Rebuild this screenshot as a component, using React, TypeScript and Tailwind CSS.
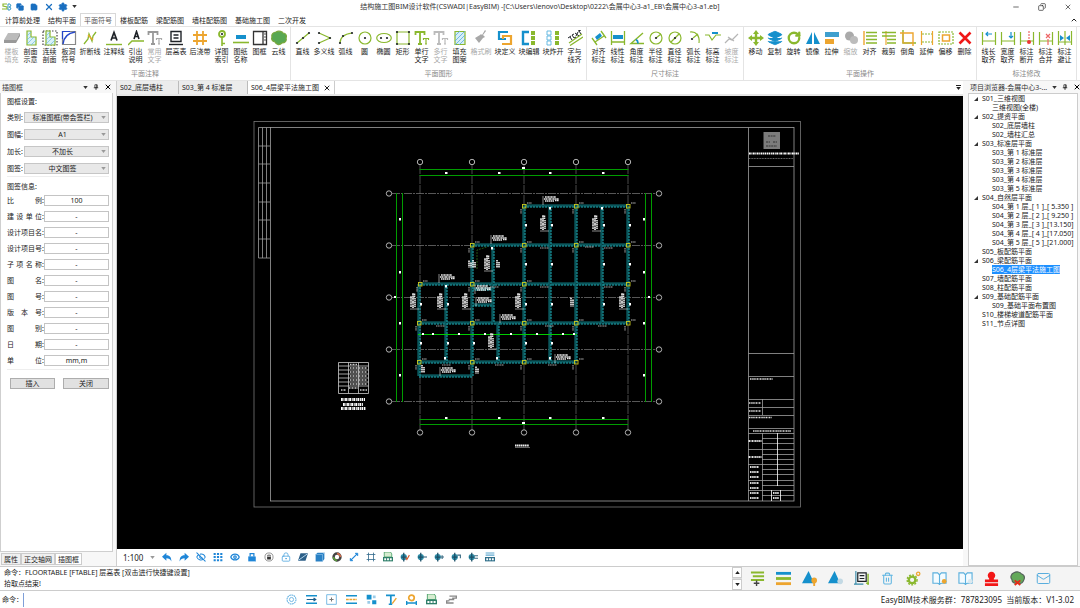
import type { ReactNode } from 'react';
import {
  ChevronUp, Copy, Eye, EyeOff, Layers, LockKeyhole, Mail, Minus, RotateCw, Save, Settings, Trash2, X,
} from 'lucide-react';

const G = '#8ab82e';
const B = '#1590cc';
const O = '#eda52f';
const K = '#1f2328';

interface Tool {
  icon: ReactNode;
  label: string[];
  wide?: boolean;
  disabled?: boolean;
}

interface Group {
  name: string;
  tools: Tool[];
}

function Ico({ children }: { children: ReactNode }) {
  return (
    <svg viewBox="0 0 16 16" className="h-4 w-4" fill="none" strokeWidth="1.2" aria-hidden="true">
      {children}
    </svg>
  );
}

const tt = (a: string, b: string) => (
  <Ico>
    <path d="M1.500 5V2h9v3M6 2v12M4 14h4" stroke={a} strokeWidth="1.800" />
    <path d="M9.500 10V8.500h5V10M12 8.500V14M11 14h2" stroke={b} strokeWidth="1.200" />
  </Ico>
);

const dot = (x: number, y: number) => <circle cx={x} cy={y} r="1.1" fill={K} />;

const groups: Group[] = [
  {
    name: '平面注释',
    tools: [
      { label: ['楼板', '填充'], disabled: true, icon: <Ico><path d="M4 3h12l-4 7H0z" fill="#bbb" /><path d="M0 10h12l4-7v3l-4 7H0z" fill="#999" /></Ico> },
      { label: ['剖面', '示意'], icon: <Ico><path d="M4 1h4v6h5v8H4z" fill="#d8f0f8" stroke={G} /><path d="M4 6l4-4M4 10l4-4M4 14l7-7M8 15l5-5" stroke="#6bbbe0" strokeWidth=".7" /></Ico> },
      { label: ['连续', '剖面'], icon: <Ico><path d="M1 1h14v14H1z" stroke="#444" strokeDasharray="1.5 1.5" /><path d="M4 1h4v6h5v8H4z" fill="#d8f0f8" stroke={G} /><path d="M4 6l4-4M4 10l4-4M4 14l7-7M8 15l5-5" stroke="#6bbbe0" strokeWidth=".7" /></Ico> },
      { label: ['板洞', '符号'], icon: <Ico><path d="M1.500 1.500h13v13h-13z" stroke="#888" /><path d="M2 14C3 6 7 3 14 2" stroke="#2647c9" strokeWidth="1.500" /><path d="M1.500 9V1.500H9" stroke="#2647c9" /></Ico> },
      { label: ['折断线'], wide: true, icon: <Ico><path d="M2 14l4-5 1-5 3 7 1-5 3-4" stroke={G} strokeWidth="1.300" /><path d="M6 5l5 5" stroke={O} /></Ico> },
      { label: ['注释线'], wide: true, icon: <Ico><path d="M5 10.500L8 2.500l3 8M6 8h4" stroke={K} strokeWidth="1.700" /><path d="M0 14.500h16" stroke={G} strokeWidth="1.400" /></Ico> },
      { label: ['引出', '说明'], icon: <Ico><path d="M6 9L8.500 1.500 11 9M7 6.500h3" stroke={K} strokeWidth="1.600" /><path d="M0 15l4-4h12" stroke={G} strokeWidth="1.400" /></Ico> },
      { label: ['常用', '文字'], disabled: true, icon: tt('#999', '#aaa') },
      { label: ['层高表'], wide: true, icon: <Ico><path d="M3 1.500h10v10H3zM5.500 5h5M5.500 8h5" stroke={K} strokeWidth="1.400" /><path d="M1 14.500h14" stroke={K} strokeWidth="1.400" /></Ico> },
      { label: ['后浇带'], wide: true, icon: <Ico><path d="M5 1v14M11 1v14M1 5h14M1 11h14" stroke={O} strokeWidth="1.800" /></Ico> },
      { label: ['详图', '索引'], icon: <Ico><circle cx="8" cy="4" r="3" stroke={G} strokeWidth="1.800" /><path d="M8 7v9M8 13.500h3" stroke={G} strokeWidth="1.600" />{dot(8, 4)}</Ico> },
      { label: ['图纸', '名称'], icon: <Ico><path d="M3 5h10v4H3z" fill={B} /><path d="M0 12.500h16" stroke={G} strokeWidth="1.600" /></Ico> },
      { label: ['图框'], icon: <Ico><path d="M1.500 1.500h13v13h-13zM11 1.500v13" stroke="#333" strokeWidth="1.300" /><path d="M12 4h2M12 7h2M12 10h2" stroke="#555" /></Ico> },
      { label: ['云线'], icon: <Ico><path d="M5 2c3-2 7 0 7 1 3 0 4 3 3 5 1 3-1 5-4 5-3 3-6 1-7-1-3-1-4-3-3-5-1-3 2-5 4-5z" fill="#58a852" stroke="#7aa83c" /></Ico> },
    ],
  },
  {
    name: '平面图形',
    tools: [
      { label: ['直线'], icon: <Ico><path d="M2 13L14 3" stroke={G} />{dot(2, 13)}{dot(8, 8)}{dot(14, 3)}</Ico> },
      { label: ['多义线'], wide: true, icon: <Ico><path d="M3 3l11 5-11 5" stroke={G} />{dot(3, 3)}{dot(14, 8)}{dot(3, 13)}</Ico> },
      { label: ['弧线'], icon: <Ico><path d="M2 13c0-6 5-9 12-10" stroke={G} />{dot(2, 13)}{dot(5, 6)}{dot(14, 3)}</Ico> },
      { label: ['圆'], icon: <Ico><circle cx="8" cy="8" r="6" stroke={G} />{dot(8, 8)}</Ico> },
      { label: ['椭圆'], icon: <Ico><ellipse cx="8" cy="8" rx="7.300" ry="4.500" stroke={G} />{dot(5, 8)}{dot(11, 8)}</Ico> },
      { label: ['矩形'], icon: <Ico><path d="M2 2h12v12H2z" stroke={G} />{dot(2, 2)}{dot(14, 2)}{dot(2, 14)}{dot(14, 14)}</Ico> },
      { label: ['单行', '文字'], icon: tt(G, G) },
      { label: ['多行', '文字'], disabled: true, icon: tt('#bbb', '#bbb') },
      { label: ['填充', '图案'], icon: <Ico><path d="M3 1.500h10v13H3z" fill="#d6edf8" stroke={G} /><path d="M3 6l5-5M3 11L13 1M3 15L13 5M7 15l6-6" stroke="#55aedb" strokeWidth=".8" /></Ico> },
      { label: ['格式刷'], wide: true, disabled: true, icon: <Ico><path d="M13 1l-3 4 2 2-2 1-4 5-4-5 5-3 1-1 1 1 3-5z" fill="#a8a8a8" /></Ico> },
      { label: ['块定义'], wide: true, icon: <Ico><path d="M11 2H2v7h7" stroke={B} strokeWidth="2.200" /><path d="M5 14h9V6H6v3" stroke={O} strokeWidth="2.200" /></Ico> },
      { label: ['块编辑'], wide: true, icon: <Ico><path d="M8 2H2v12h6" stroke={B} strokeWidth="2.400" /><path d="M12 1v14" stroke={G} strokeWidth="4" strokeDasharray="4 1" /></Ico> },
      { label: ['块炸开'], wide: true, icon: <Ico><path d="M2 1h4v4H2zM2 6h4v4H2zM2 11h4v4H2z" stroke="#5ab3df" strokeWidth=".9" /><path d="M12 1v14" stroke={G} strokeWidth="4" strokeDasharray="4 1" /></Ico> },
      { label: ['字与', '线齐'], icon: <Ico><path d="M2 13L15 4M3 15.500L16 7" stroke={G} strokeWidth="1.300" /><path d="M1 8l3-2M3 7l2 3M5 5l2 3 2-1M5 5l2-1M8 3l4 3M11 2l-2 4M11 1l3-1M12 1l2 3" stroke={K} strokeWidth="1" /></Ico> },
    ],
  },
  {
    name: '尺寸标注',
    tools: [
      { label: ['对齐', '标注'], icon: <Ico><path d="M1 8l5 7M10 1l5 7M4 12l9-6" stroke={G} strokeWidth="1.300" /><path d="M4 7l5-4 2 3-5 4z" fill={B} /></Ico> },
      { label: ['线性', '标注'], icon: <Ico><path d="M1.500 1v14M14.500 1v14M2 12h12" stroke={G} strokeWidth="1.300" /><path d="M3 5h10v4H3z" fill={B} /></Ico> },
      { label: ['角度', '标注'], icon: <Ico><path d="M14 3L2 13.500h13" stroke={G} strokeWidth="1.400" /><path d="M7 9.500c2 1 2 2.500 2 4" stroke={B} strokeWidth="1.800" /></Ico> },
      { label: ['半径', '标注'], icon: <Ico><circle cx="8" cy="8" r="6" stroke={G} /><path d="M8 8l5-4" stroke={G} />{dot(8, 8)}</Ico> },
      { label: ['直径', '标注'], icon: <Ico><circle cx="8" cy="8" r="6" stroke={G} /><path d="M4 12l8-8" stroke={G} />{dot(8, 8)}</Ico> },
      { label: ['弧长', '标注'], icon: <Ico><path d="M4 2c6-1 10 4 9 11M7 8l5-4" stroke={G} />{dot(6, 9)}</Ico> },
      { label: ['标高', '标注'], icon: <Ico><path d="M0 5h4l3 5 4-5h5" stroke={G} strokeWidth="1.200" /><path d="M7 3h6" stroke={B} strokeWidth="2" /></Ico> },
      { label: ['坡度', '标注'], disabled: true, icon: <Ico><path d="M1 13l4-4 3 1 6-6M4 7l6 4" stroke="#b5b5b5" /></Ico> },
    ],
  },
  {
    name: '平面操作',
    tools: [
      { label: ['移动'], icon: <Ico><path d="M8 0l3 4H9.200v2.800H12V5l4 3-4 3V9.200H9.200V12H11l-3 4-3-4h1.800V9.200H4V11L0 8l4-3v1.800h2.800V4H5z" fill={G} /></Ico> },
      { label: ['复制'], icon: <Layers className="h-4 w-4 fill-[#1590cc] text-[#1590cc]" strokeWidth={1.5} /> },
      { label: ['旋转'], icon: <RotateCw className="h-4 w-4 p-px text-[#8ab82e]" strokeWidth={4} /> },
      { label: ['镜像'], icon: <Ico><path d="M7 2v12H1zM9 2v12h6z" fill={B} /></Ico> },
      { label: ['拉伸'], icon: <Ico><path d="M1 2h14v5H1z" fill="#3f9fce" /><path d="M1 9h9v5H1z" fill={O} /></Ico> },
      { label: ['缩放'], disabled: true, icon: <Ico><circle cx="6.500" cy="6" r="4.500" fill="#aaa" /><circle cx="11" cy="10" r="4" fill="#bcbcbc" /></Ico> },
      { label: ['对齐'], icon: <Ico><path d="M2 1v14" stroke={O} strokeWidth="1.400" /><path d="M4 2.500h11M4 6h11M4 9.500h11M4 13h11" stroke={G} strokeWidth="1.700" /></Ico> },
      { label: ['裁剪'], icon: <Ico><path d="M5 1v14" stroke={O} /><path d="M1 2.500h14M1 6h14M6 9.500h9M6 13h9" stroke={G} strokeWidth="1.700" /></Ico> },
      { label: ['倒角'], icon: <Ico><path d="M3 0v13h13" stroke={G} strokeWidth="1.400" /><path d="M0 3h13v13" stroke={O} strokeWidth="1.400" /><path d="M3 3v10h10" stroke={O} /></Ico> },
      { label: ['延伸'], icon: <Ico><path d="M2.500 1v14M13.500 1v14" stroke={O} strokeWidth="1.200" /><path d="M3 4h10M3 12h10" stroke={G} strokeDasharray="2 1" /></Ico> },
      { label: ['偏移'], icon: <Ico><path d="M1 2h14v12H1z" stroke={G} strokeDasharray="2 1" /><path d="M4.500 5h7v6h-7z" stroke={O} strokeWidth="1.500" /></Ico> },
      { label: ['删除'], icon: <Ico><path d="M2.500 2.500l11 11M13.500 2.500l-11 11" stroke="#f01818" strokeWidth="2.600" /></Ico> },
    ],
  },
  {
    name: '标注修改',
    tools: [
      { label: ['线长', '取齐'], icon: <Ico><path d="M1.500 2v13M14.500 2v13M1 11h14" stroke={G} /><path d="M11 4H5M7 2L5 4l2 2" stroke={B} /></Ico> },
      { label: ['宽度', '取齐'], icon: <Ico><path d="M1.500 2v13M14.500 2v13M1 11h14" stroke={G} /><path d="M11 2v6M9 6l2 2 2-2" stroke={B} /></Ico> },
      { label: ['标注', '断开'], icon: <Ico><path d="M1.500 2v13M14.500 2v13M1 11h14" stroke={G} /><path d="M10 1v8" stroke="#e66" strokeDasharray="2 1" /><circle cx="10" cy="12" r="2" fill="#e33" /></Ico> },
      { label: ['标注', '合并'], icon: <Ico><path d="M1.500 2v13M14.500 2v13M1 11h14" stroke={G} /><path d="M8 4l4 4M12 4L8 8M10 9v6" stroke="#e66" /></Ico> },
      { label: ['标注', '避让'], icon: <Ico><path d="M1.500 1v14M8 1v14M14.500 1v14M1 12h14" stroke={G} /><path d="M3 5l4 3-4 3zM13 5L9 8l4 3z" fill={B} /></Ico> },
    ],
  },
];

const ribbonTabs = ['计算前处理', '结构平面', '平面符号', '楼板配筋', '梁配筋图', '墙柱配筋图', '基础施工图', '二次开发'];

const selects = [
  { label: '类别:', value: '标准图框(带会签栏)' },
  { label: '图幅:', value: 'A1' },
  { label: '加长:', value: '不加长' },
  { label: '图签:', value: '中文图签' },
];

const fields = [
  ['比例', '100'], ['建设单位', '-'], ['设计项目名', '-'], ['设计项目号', '-'], ['子项名称', '-'], ['图名', '-'],
  ['图号', '-'], ['版本号', '-'], ['图别', '-'], ['日期', '-'], ['单位', 'mm,m'],
];

const tree = [
  { name: 'S01_三维视图', items: ['三维视图(全楼)'] },
  { name: 'S02_提资平面', items: ['S02_底层墙柱', 'S02_墙柱汇总'] },
  { name: 'S03_标准层平面', items: ['S03_第 1 标准层', 'S03_第 2 标准层', 'S03_第 3 标准层', 'S03_第 4 标准层', 'S03_第 5 标准层'] },
  { name: 'S04_自然层平面', items: ['S04_第 1 层_[ 1 ]_[ 5.350 ]', 'S04_第 2 层_[ 2 ]_[ 9.250 ]', 'S04_第 3 层_[ 3 ]_[13.150]', 'S04_第 4 层_[ 4 ]_[17.050]', 'S04_第 5 层_[ 5 ]_[21.000]'] },
  { name: 'S05_板配筋平面', items: [] },
  { name: 'S06_梁配筋平面', items: ['S06_4层梁平法施工图'] },
  { name: 'S07_墙配筋平面', items: [] },
  { name: 'S08_柱配筋平面', items: [] },
  { name: 'S09_基础配筋平面', items: ['S09_基础平面布置图'] },
  { name: 'S10_楼梯坡道配筋平面', items: [] },
  { name: 'S11_节点详图', items: [] },
];

const SELECTED = 'S06_4层梁平法施工图';

function Caret({ className = '' }: { className?: string }) {
  return (
    <svg viewBox="0 0 6 4" className={`h-[3px] w-[5px] ${className}`} aria-hidden="true">
      <path d="M0 0h6L3 4z" fill="currentColor" />
    </svg>
  );
}

function Pin() {
  return (
    <svg viewBox="0 0 8 8" className="h-1.5 w-1.5" fill="none" stroke="#222" aria-hidden="true">
      <path d="M2.500 1h3v4h-3zM1 5h6M4 5v3M5 1v4" />
    </svg>
  );
}

function PanelTitle({ title }: { title: string }) {
  return (
    <div className="flex h-3 items-center gap-[5px] pl-0.5 pr-px text-[#333]">
      <h2 className="flex-1 whitespace-nowrap">{title}</h2>
      <button aria-label="菜单"><Caret /></button>
      <button aria-label="固定"><Pin /></button>
      <button aria-label="关闭面板"><X className="h-2 w-2 text-black" strokeWidth={3} /></button>
    </div>
  );
}

function TitleBar() {
  return (
    <header className="grid h-[13px] grid-cols-[1fr_auto_1fr] items-center">
      <div className="flex items-center gap-1 pl-0.5 text-[#1a6fc0]">
        <svg viewBox="0 0 10 8" className="h-2 w-2.5" fill="none" aria-hidden="true">
          <path d="M5 1H1v2l4 1v2H0" stroke={G} strokeWidth="1.200" />
          <path d="M6 1h2l1 2-2 1 2 1-1 2H6z" stroke="#3a9bc8" />
        </svg>
        <button aria-label="打开"><Copy className="h-2 w-2 fill-[#1a6fc0]" /></button>
        <button aria-label="保存" className="pl-0.5"><Save className="h-2 w-2 fill-[#1a6fc0]" /></button>
        <button aria-label="清除" className="pl-0.5"><X className="h-2.5 w-2.5" strokeWidth={3} /></button>
        <button aria-label="设置"><Settings className="h-2.5 w-2.5 fill-[#1a6fc0]" /></button>
        <button aria-label="更多"><Caret className="text-[#333]" /></button>
      </div>
      <h1 className="whitespace-nowrap text-[#333]">
        结构施工图BIM设计软件(CSWADI|EasyBIM) -[C:\Users\lenovo\Desktop\0222\会展中心3-a1_EB\会展中心3-a1.eb]
      </h1>
      <div className="flex items-center justify-end gap-[18px] pr-2">
        <button aria-label="最小化"><Minus className="h-2 w-2" /></button>
        <button aria-label="还原"><Copy className="h-2 w-2 -scale-x-100" /></button>
        <button aria-label="关闭"><X className="h-2 w-2" /></button>
      </div>
    </header>
  );
}

function Ribbon() {
  return (
    <>
      <nav className="flex h-[13px] items-stretch pl-px">
        {ribbonTabs.map(t => (
          <button
            key={t}
            className={`whitespace-nowrap border-x border-t px-[3px] ${t === '平面符号' ? 'border-[#d8d8d8] bg-white text-[#555]' : 'border-transparent'}`}
          >
            {t}
          </button>
        ))}
        <button aria-label="收起功能区" className="ml-auto px-0.5"><ChevronUp className="h-2 w-2" strokeWidth={3} /></button>
      </nav>
      <div className="flex h-[55px] border-y border-[#e4e4e4]">
        {groups.map(g => (
          <section key={g.name} className="flex flex-col border-r border-[#e4e4e4] px-0.5 pt-[3px]">
            <div className="flex flex-1 items-start">
              {g.tools.map(t => (
                <button
                  key={t.label.join('')}
                  disabled={t.disabled}
                  className={`flex flex-col items-center gap-0.5 leading-[8px] ${t.wide ? 'w-6' : 'w-[19px]'} ${t.disabled ? 'text-[#aaa]' : ''}`}
                >
                  {t.icon}
                  <span className="whitespace-nowrap">
                    {t.label.map(l => <span key={l} className="block">{l}</span>)}
                  </span>
                </button>
              ))}
            </div>
            <h2 className="h-3 text-center text-[#888]">{g.name}</h2>
          </section>
        ))}
      </div>
    </>
  );
}

function FramePanel() {
  return (
    <aside className="flex w-[113px] shrink-0 flex-col">
      <PanelTitle title="插图框" />
      <form className="flex-1 border-x border-b border-[#cfcfcf] bg-white pl-1.5 pr-[3px] pt-[3px]">
        <fieldset className="border-b border-[#eee]">
          <legend className="h-3 leading-[12px]">图框设置:</legend>
          <div className="flex flex-col gap-1.5 pb-0.5 pt-1">
            {selects.map(s => (
              <label key={s.label} className="flex h-[11px] items-center justify-between">
                {s.label}
                <span className="relative flex">
                  <select className="h-[11px] w-[85px] appearance-none border border-[#c6c6c6] bg-[#e8e8e8] pr-2 leading-[9px] [text-align-last:center]">
                    <option>{s.value}</option>
                  </select>
                  <Caret className="pointer-events-none absolute right-[3px] top-1 text-[#999]" />
                </span>
              </label>
            ))}
          </div>
        </fieldset>
        <fieldset className="border-b border-[#eee] pt-1.5">
          <legend className="h-3 pt-1 leading-[12px]">图签信息:</legend>
          <div className="flex flex-col gap-[5px] pb-[3px]">
            {fields.map(([name, value]) => (
              <label key={name} className="flex h-[11px] items-center">
                <span className="w-[35px] [text-align-last:justify]">{name}</span>
                <span>:</span>
                <input defaultValue={value} className="ml-auto h-[11px] w-[65px] border border-[#c4c4c4] text-center" />
              </label>
            ))}
          </div>
        </fieldset>
        <div className="flex justify-between pl-[3px] pt-2">
          <button type="button" className="h-[11px] w-[45px] border border-[#adadad] bg-[#e1e1e1] leading-[9px]">插入</button>
          <button type="button" className="h-[11px] w-[46px] border border-[#adadad] bg-[#e1e1e1] leading-[9px]">关闭</button>
        </div>
      </form>
      <div className="flex h-3.5 items-center pl-px">
        <button className="h-3 border border-[#ccc] bg-[#f0f0f0] px-0.5">属性</button>
        <button className="h-3 border border-[#ccc] bg-[#f0f0f0] px-0.5">正交轴网</button>
        <button className="h-3 border border-[#ccc] bg-white px-0.5">插图框</button>
      </div>
    </aside>
  );
}

const colX = [420, 472, 524, 576, 628];
const rowY = [193, 245, 297, 349, 401];

// [x1, y1, x2, y2]
const beams = [
  [524, 206, 628, 206], [472, 245, 628, 245], [420, 284, 628, 284], [419, 323, 628, 323],
  [419, 362, 576, 362], [419, 376, 472, 376], [472, 305, 493, 305], [472, 289, 493, 289],
  [419, 284, 419, 376], [446, 284, 446, 362], [472, 245, 472, 376], [493, 245, 493, 323],
  [498, 323, 498, 362], [524, 206, 524, 362], [550, 206, 550, 362], [576, 206, 576, 362],
  [602, 206, 602, 323], [628, 206, 628, 323],
];

const columns = [
  [524, 206], [576, 206], [628, 206], [472, 245], [524, 245], [576, 245], [628, 245],
  [420, 284], [472, 284], [524, 284], [628, 284], [419, 323], [472, 323], [524, 323],
  [576, 323], [628, 323], [419, 362], [472, 362], [524, 362], [576, 362],
];

const notesH = [[543, 199], [491, 238], [439, 277], [476, 300], [500, 317], [555, 357], [440, 370], [475, 288]];
const notesV = [[543, 217], [595, 217], [487, 257], [413, 295], [440, 295], [465, 295], [518, 295], [622, 295], [491, 335]];
const smallNotes = [[473, 264, 8], [469, 264, 7], [497, 264, 8], [422, 369, 8], [476, 370, 7], [571, 302, 9]];

function Note({ x, y, vertical }: { x: number; y: number; vertical?: boolean }) {
  return (
    <g transform={vertical ? `translate(${x} ${y + 14}) rotate(-90)` : `translate(${x} ${y})`} stroke="#e8e8e8" fill="none">
      <path d="M0 -3v9" strokeWidth=".6" />
      <path d="M2 -2h11" strokeWidth="1.600" strokeDasharray="1.500 .3 .8 .3" />
      <path d="M1 0h15" strokeWidth="1.700" strokeDasharray="1 .3 2 .4" />
      <path d="M2 2h9M12 1.500h4" strokeWidth="1.600" strokeDasharray="1.600 .4" />
    </g>
  );
}

function Drawing() {
  const titleRows = [166, 353, 376, 399, 407, 415, 428, 433];
  const signRows = [438, 443, 449, 454, 459, 464, 469, 474, 480, 485, 490, 495];
  return (
    <svg viewBox="117 96 846 453" className="min-h-0 w-full flex-1 bg-black" fill="none" role="img" aria-label="梁平法施工图">
      <g stroke="#a0a0a0" strokeWidth=".8">
        <rect x="254" y="121.500" width="546.500" height="385.500" stroke="#777" />
        <rect x="270.500" y="127.500" width="523.500" height="373.500" />
        <path d="M258.500 127.500H270M258.500 127.500V258M262.500 127.500V258M266.500 127.500V258M258.500 258H270M258.500 146H270M258.500 164H270M258.500 183H270M258.500 202H270M258.500 220H270M258.500 239H270" />
        <path d="M748.500 127.500V501" />
        {titleRows.map(y => <path key={y} d={`M748.500 ${y}.5H794`} />)}
        {signRows.map(y => <path key={y} d={`M762 ${y}.5H794`} />)}
        <path d="M762.500 399V415M762.500 433V501" />
        <path d="M777.500 433V486M771.500 490V501M780.500 490V501" stroke="#fff" />
        <path d="M748 464.500H762M748 480.500H762M748 449.500H762M748 490.500H762" />
      </g>
      <rect x="763.500" y="132" width="16.500" height="17" fill="#7c7c7c" />
      <path d="M768 136h8M766 142h4M773 142h4M766 146h11" stroke="#333" strokeDasharray="2 .6" />
      <path d="M749 153.500H799" stroke="#fff" strokeWidth="2" strokeDasharray="1.800 .6 1 .5" />
      <path d="M749 158.500H793" stroke="#999" strokeWidth=".7" strokeDasharray="1 .6" />
      <g stroke="#ddd" strokeWidth="1.500" strokeDasharray="1.500 .5 .8 .5">
        <path d="M750 379H773M749 403H761M749 411H761M749 417.500H772M753 431H791" />
        <path d="M748.500 441H762M748.500 457H762M750 467H759M750 472H759M750 477H759M750 483H759M750 488H759M750 493H759M750 498H759M773 493h6M773 498h6" strokeWidth="2.200" />
      </g>

      {/* axis grid */}
      <g stroke="#7d7d7d" strokeWidth=".7">
        {colX.map(x => <path key={x} d={`M${x} 165V430`} stroke="#6c6c6c" strokeDasharray="9 1" />)}
        {rowY.map(y => <path key={y} d={`M392 ${y}.5H656`} strokeDasharray="8 1 2 1" />)}
      </g>
      <g stroke="#c5c5c5" strokeWidth=".9">
        {colX.map(x => <g key={x}><circle cx={x} cy="162" r="2.700" /><circle cx={x} cy="432.500" r="2.700" /></g>)}
        {rowY.map(y => <g key={y}><circle cx="389" cy={y + 0.5} r="2.700" /><circle cx="659" cy={y + 0.5} r="2.700" /></g>)}
      </g>

      <g stroke="#009c00" strokeWidth="1">
        <path d="M419.500 169.500H628.500M419.500 175.500H628.500M419.500 419.500H628.500M419.500 424.500H628.500" />
        <path d="M396.500 193V402M402.500 193V402M645.500 193V402M651.500 193V402" />
      </g>
      <g fill="#fff">
        {[445, 498, 549, 602].map(x => <g key={x}><rect x={x} y="172" width="2.500" height="2" /><rect x={x} y="417" width="2.500" height="2" /></g>)}
        {[218, 271, 322, 374].map(y => <g key={y}><rect x="399" y={y} width="2" height="2.500" /><rect x="643" y={y} width="2" height="2.500" /></g>)}
        <path d="M522 167h3v2h-3zM522 422h3v2h-3zM394 296h2v2h-2zM648 296h2v2h-2z" />
      </g>

      {beams.map(([x1, y1, x2, y2]) => (
        <g key={`${x1}-${y1}-${x2}-${y2}`}>
          <path d={`M${x1} ${y1}L${x2} ${y2}`} stroke="#063c40" strokeWidth="2.600" />
          <path d={x1 === x2 ? `M${x1 - 1} ${y1}V${y2}` : `M${x1} ${y1 - 1}H${x2}`} stroke="#138088" strokeWidth=".8" />
          <path d={x1 === x2 ? `M${x1 + 1} ${y1}V${y2}` : `M${x1} ${y1 + 1}H${x2}`} stroke="#22b6bf" strokeWidth=".9" strokeDasharray="2 1" />
        </g>
      ))}
      <path d="M418 334.500H577" stroke="#00cc00" />
      {[422, 432, 458, 484, 510, 536, 562, 573].map(x => <rect key={x} x={x} y="333" width="2" height="2" fill="#fff" />)}
      {columns.map(([x, y]) => (
        <g key={`${x}-${y}`}>
          <rect x={x - 1.5} y={y - 1.5} width="3.500" height="3.500" stroke="#c9c91e" strokeWidth=".9" />
          <path d={`M${x + 3} ${y - 3}h5M${x - 3} ${y + 3}v5`} stroke="#bbb" strokeWidth="1" strokeDasharray="1.200 .4" />
        </g>
      ))}
      {[[525, 225], [551, 225], [603, 225], [629, 225], [525, 264], [551, 264], [603, 264], [629, 264], [420, 304], [447, 304], [525, 304], [551, 304], [603, 304], [629, 304], [420, 343], [447, 343], [473, 343], [525, 343], [551, 343], [549, 208], [601, 208], [491, 248], [445, 286], [444, 358], [496, 358], [549, 358]].map(([x, y]) => (
        <rect key={`${x}-${y}`} x={x} y={y - 1} width="2" height="2.500" fill="#fff" />
      ))}
      {[[540, 248], [585, 247], [604, 248], [540, 287], [604, 287], [490, 287], [436, 326], [545, 326], [598, 326], [442, 365], [495, 365], [548, 365]].map(([x, y]) => (
        <path key={`${x}-${y}`} d={`M${x} ${y}h9`} stroke="#aaa" strokeWidth="1.200" strokeDasharray="1.200 .5" />
      ))}
      {notesH.map(([x, y]) => <Note key={`${x}-${y}`} x={x} y={y} />)}
      {notesV.map(([x, y]) => <Note key={`${x}-${y}`} x={x} y={y} vertical />)}
      {smallNotes.map(([x, y, h]) => (
        <path key={`${x}-${y}`} d={`M${x} ${y - h / 2}v${h}M${x + 2} ${y - h / 2 + 2}v${h - 2}`} stroke="#f4f4f4" strokeWidth="1.600" strokeDasharray="1.600 .4" />
      ))}
      <path d="M477 269V250l10-3" stroke="#3c8a1c" strokeWidth=".6" strokeDasharray="2 1" />

      {/* floor table */}
      <g stroke="#ccc" strokeWidth=".8">
        <path d="M338.500 362.500H368.500V393.500H338.500zM348.500 362.500V393.500M358.500 362.500V393.500" />
        <path d="M338.500 366H368.500M338.500 370H368.500M338.500 374H368.500M338.500 378H368.500M338.500 382H368.500M338.500 386H368.500" />
        <path d="M350 364.500h7M350 368h17M350 372h17M350 376h17M350 380h17M350 384h17M341 390h5M349 388h9M360 390h7" strokeWidth="1.500" strokeDasharray="1 .5" />
        <path d="M341 399.500H365M343 404.500H363M341 408.500H366" stroke="#fff" strokeWidth="2.800" strokeDasharray="1.800 .7 1 .6" />
      </g>
      <path d="M515 445.500H529" stroke="#eee" strokeWidth="2" strokeDasharray="1.500 .4" />
      <path d="M515 447.500H530" stroke="#aaa" strokeWidth=".6" />
    </svg>
  );
}

const dwg = (
  <Ico>
    <path d="M2 0h10l2 3v5H2z" fill="#d6ecd0" stroke="#3c9a5c" />
    <path d="M0 8h16v7H0z" fill="#2f7f6a" />
    <path d="M2 11.500h12" stroke="#fff" strokeWidth="3" strokeDasharray="3 1.500" />
  </Ico>
);

const tag = (mark: string) => (
  <Ico>
    <circle cx="6" cy="8" r="5" fill="#2d8ea8" />
    <path d="M6 1v14M2 8h8" stroke="#1c4e66" strokeWidth="2" />
    <path d={mark} stroke="#3c6c84" strokeWidth="1.800" />
  </Ico>
);

const viewTools: [string, ReactNode][] = [
  ['撤销', <Ico><path d="M7 1v4c6 0 8 4 8 10-2-4-4-5-8-5v4L0 7.500z" fill="#1f86d8" /></Ico>],
  ['重做', <Ico><path d="M9 1v4C3 5 1 9 1 15c2-4 4-5 8-5v4l7-6.500z" fill="#1f86d8" /></Ico>],
  ['隐藏', <EyeOff className="h-2.5 w-2.5" strokeWidth={2.5} />],
  ['网格', <Ico><path d="M1 3h14M1 8h14M1 13h14" stroke="#1f86d8" strokeWidth="3.200" strokeDasharray="3.400 1.900" /></Ico>],
  ['显示', <Eye className="h-2.5 w-2.5" strokeWidth={3} />],
  ['锁定', <Ico><path d="M2 7h12v8H2z" fill="#1f86d8" /><path d="M5 7V2.500h6V7" stroke="#1f86d8" strokeWidth="2" /></Ico>],
  ['图层锁', <Ico><circle cx="8" cy="8" r="6.500" stroke="#777" /><path d="M5 7.500h6V12H5z" fill="#333" /><path d="M6 7V5h4v2" stroke="#333" /></Ico>],
  ['视图锁', <LockKeyhole className="h-2.5 w-2.5 text-[#56a8e0]" />],
  ['截面', <Ico><path d="M4 2h12l-4 12H0z" fill="#2c5f88" /><path d="M1 13L15 3" stroke="#bcdcf2" strokeWidth="1.500" /></Ico>],
  ['实体', <Ico><path d="M4 1h11v10l-3 4H1V4z" fill="#2980c4" /><path d="M1 4h11v11M12 4l3-3" stroke="#7db8e4" /></Ico>],
  ['颜色', <Ico><circle cx="8" cy="8" r="5.500" stroke="#444" strokeWidth="4" /><path d="M8 2.500A5.500 5.500 0 0 1 13.500 8" stroke="#cf6c4c" strokeWidth="3" /><path d="M2.500 8A5.500 5.500 0 0 0 8 13.500" stroke="#5a9a3c" strokeWidth="3" /></Ico>],
  ['测量', <Ico><path d="M3 13L13 3" stroke="#1f86d8" strokeWidth="2" /><path d="M10 2h4v4zM2 10v4h4z" fill="#1f86d8" stroke="#1f86d8" /></Ico>],
  ['轴网', <Ico><path d="M4 1v14M12 1v14M1 4h14M1 12h14" stroke="#336a8c" strokeWidth="1.300" /></Ico>],
  ['导入图纸', dwg],
  ['标记确认', <Ico><circle cx="6" cy="8" r="5" fill="#2d8ea8" /><path d="M6 1v14M2 8h8" stroke="#1c4e66" strokeWidth="2" /><path d="M9 9l2 3 4-7" stroke="#d2552a" strokeWidth="1.800" /></Ico>],
  ['标记删除', tag('M10 8h6')],
  ['标记添加', tag('M10 8h6M13 5v6')],
  ['标记修改', tag('M10 5h5v5')],
  ['标记列表', tag('M10 6h6M10 10h6')],
  ['导出图纸', <Ico><path d="M1 1.500h14M1 5h14" stroke="#5ea8d0" strokeWidth="1.800" /><path d="M0 8h16v7H0z" fill="#2f6f8a" /><path d="M2 11.500h12" stroke="#fff" strokeWidth="3" strokeDasharray="3 1.500" /></Ico>],
];

const cmdTools: [string, ReactNode][] = [
  ['捕捉', <Ico><circle cx="8" cy="8" r="6.500" stroke="#5faee0" strokeWidth="1.500" strokeDasharray="2.500 .8" /><circle cx="8" cy="8" r="3" stroke="#5faee0" /></Ico>],
  ['正交', <Ico><path d="M0 2.500h16M0 13.500h16" stroke={B} strokeWidth="2" /><path d="M1 8h13M11 6l3 2-3 2" stroke="#1d5f8c" strokeWidth="1.800" /></Ico>],
  ['框选', <Ico><path d="M1 1h14v14H1z" stroke="#5faee0" /><path d="M8 5v6M5 8h6" stroke="#777" strokeWidth="1.500" /></Ico>],
  ['线宽', <Ico><path d="M0 2.500h16M0 13.500h16" stroke={B} strokeWidth="2" /><path d="M0 8h16" stroke={O} strokeWidth="2" strokeDasharray="4 1" /></Ico>],
  ['对象', <Ico><path d="M1 1h7v7H1zM9 9h6v6H9z" fill={B} /><path d="M10 2h4v4h-4zM2 10h4v4H2z" fill="#9acbe8" /></Ico>],
  ['文字', <Ico><path d="M0 2h13M7 2v13M4 15h5" stroke={B} strokeWidth="2.500" /><path d="M9 14l6-8" stroke={O} strokeWidth="2" /></Ico>],
  ['标注', <Ico><circle cx="8" cy="5.500" r="4" stroke={O} strokeWidth="2.500" /><path d="M1 10v6M15 10v6M1 13h14" stroke={B} strokeWidth="2" /></Ico>],
  ['图纸', dwg],
  ['流程', <Ico><path d="M5 3h10v3H9M4 8h8M11 13H1v-3h4" stroke="#888" strokeWidth="2" /></Ico>],
];

const book = (c: string) => (
  <Ico>
    <path d="M1 2h5l2 2v10l-2-1H1zM15 2h-5L8 4v10l2-1h5z" stroke="#5bb0dd" fill="#f3fbff" />
    <circle cx="13" cy="11" r="2.500" fill={c} />
  </Ico>
);

const sideTools: [string, ReactNode][] = [
  ['添加图层', <Ico><path d="M1 1.500h14M3 5.500h12M1 9.500h14" stroke={G} strokeWidth="2.200" /><path d="M7 10v6M4 13h6" stroke="#444" strokeWidth="1.500" /></Ico>],
  ['图层列表', <Ico><path d="M0 2.500h16" stroke={B} strokeWidth="3" /><path d="M0 8h16" stroke={G} strokeWidth="3" /><path d="M0 13.500h16" stroke={O} strokeWidth="3" /></Ico>],
  ['高亮', <Ico><path d="M7 0l6 13H0z" fill={B} /><circle cx="13" cy="10" r="3" fill={O} /><path d="M13 12v4" stroke={O} strokeWidth="2" /></Ico>],
  ['取消高亮', <Ico><path d="M7 0l6 13H0z" fill={B} /><circle cx="13" cy="11" r="3" fill="#c3d9e4" /></Ico>],
  ['图纸集', <Ico><path d="M2 0v14H0M1 14h9" stroke="#3489a8" /><path d="M15 3v12M13 13h3" stroke={G} strokeWidth="1.500" /><path d="M4 2h9v9H4zM6 5h5M6 8h5" stroke={K} strokeWidth="1.300" /></Ico>],
  ['回收', <Trash2 className="p-px text-[#62b6e2]" />],
  ['设置', <Ico><circle cx="6.500" cy="9.500" r="3.500" stroke={G} strokeWidth="2.500" /><circle cx="6.500" cy="9.500" r="5.300" stroke={G} strokeWidth="1.500" strokeDasharray="2 1.500" /><circle cx="13" cy="3" r="1.800" stroke={O} strokeWidth="1.400" /></Ico>],
  ['手册', book(O)],
  ['教程', book('#dbe8ee')],
  ['印章', <Ico><path d="M5.500 8a4 4 0 1 1 5 0v1H15v3H1V9h4.500zM1 13h14v3H1z" fill="#f21616" /></Ico>],
  ['删除云线', <Ico><path d="M4 2c3-2 7-1 8 1 3 1 4 3 3 6-1 3-3 5-6 4-4 1-7-1-7-4-2-2-1-6 2-7z" fill="#63a95a" stroke="#53605a" /><path d="M5 10l6 5M11 10l-6 5" stroke="#e42c18" strokeWidth="2" /></Ico>],
  ['邮件', <Mail className="text-[#4fa9dc]" strokeWidth={1.5} />],
];

function Viewport() {
  return (
    <main className="flex min-w-0 flex-1 flex-col border-l border-[#cfcfcf] bg-white">
      <div className="flex h-[15px] items-stretch border-b-2 border-[#e6e6e6]">
        <button className="w-[62px] border-r border-[#bbb] bg-[#ececec] pl-[3px] text-left">S02_底层墙柱</button>
        <button className="w-[69px] border-r border-[#bbb] bg-[#ececec] pl-[3px] text-left">S03_第 4 标准层</button>
        <div className="flex items-center gap-1 border-r border-[#ccc] px-[3px]">
          <button className="whitespace-nowrap">S06_4层梁平法施工图</button>
          <button aria-label="关闭图纸"><X className="h-2 w-2" strokeWidth={3} /></button>
        </div>
        <button aria-label="图纸列表" className="ml-auto flex flex-col items-center justify-center gap-px px-0.5">
          <span className="h-px w-[5px] bg-[#222]" />
          <Caret />
        </button>
      </div>
      <Drawing />
      <div className="flex h-[17px] items-center pb-px pl-1.5">
        <select aria-label="比例" className="w-[23px] appearance-none text-[8px]"><option>1:100</option></select>
        <Caret className="ml-1 mr-[3px] text-[#999]" />
        {viewTools.map(([name, icon]) => (
          <button key={name} aria-label={name} className="flex w-[17px] justify-center text-[#1f86d8] [&>svg]:h-2.5 [&>svg]:w-2.5">{icon}</button>
        ))}
      </div>
    </main>
  );
}

function Browser() {
  return (
    <aside className="ml-0.5 flex w-[112px] shrink-0 flex-col pr-0.5">
      <PanelTitle title="项目浏览器-会展中心3-..." />
      <ul className="flex-1 border border-[#ccc] bg-white leading-[9px]">
        {tree.map(n => (
          <li key={n.name}>
            <div className="flex items-center whitespace-nowrap pl-1">
              <span className="flex w-[9px]">
                {n.items.length > 0 && (
                  <svg viewBox="0 0 4 4" className="ml-px h-1 w-1" aria-hidden="true"><path d="M4 0v4H0z" fill="#333" /></svg>
                )}
              </span>
              {n.name}
            </div>
            {n.items.length > 0 && (
              <ul className="pl-[23px]">
                {n.items.map(i => (
                  <li key={i} className="whitespace-nowrap">
                    <span className={i === SELECTED ? 'block w-fit bg-[#1e90ff] text-white' : ''}>{i}</span>
                  </li>
                ))}
              </ul>
            )}
          </li>
        ))}
      </ul>
    </aside>
  );
}

export default function App() {
  return (
    <div className="flex min-h-screen flex-col bg-white font-['Noto_Sans','Noto_Sans_CJK_SC',sans-serif] text-[7px] leading-[11px] text-[#222]">
      <TitleBar />
      <Ribbon />
      <div className="flex flex-1 gap-[3px] bg-[#f7f7f7]">
        <FramePanel />
        <Viewport />
        <Browser />
      </div>

      <div className="flex h-[25px] items-stretch border-y border-[#ccc] bg-[#f4f4f4]">
        <div className="flex-1 bg-white pl-1">
          <p>命令：FLOORTABLE [FTABLE] 层高表 [双击进行快捷键设置]</p>
          <p>拾取点结束!</p>
        </div>
        <div className="flex w-2.5 flex-col gap-px bg-[#ddd]">
          <button aria-label="向上滚动" className="flex flex-1 items-center justify-center border border-[#ccc] bg-white"><Caret className="rotate-180" /></button>
          <button aria-label="向下滚动" className="flex flex-1 items-center justify-center border border-[#ccc] bg-white"><Caret /></button>
        </div>
        <div className="flex items-center pl-0.5 pr-6">
          {sideTools.map(([name, icon]) => (
            <button key={name} aria-label={name} className="flex w-[26px] justify-center [&>svg]:h-[15px] [&>svg]:w-[15px]">{icon}</button>
          ))}
        </div>
      </div>
      <footer className="flex h-[18px] items-center border-b border-[#ddd]">
        <label htmlFor="cmd" className="w-[23px] pl-0.5">命令：</label>
        <input id="cmd" className="h-3.5 w-[263px] border-l border-[#7f9fd8]" />
        <div className="flex gap-[9px]">
          {cmdTools.map(([name, icon]) => (
            <button key={name} aria-label={name} className="[&>svg]:h-[11px] [&>svg]:w-[11px]">{icon}</button>
          ))}
        </div>
        <p className="ml-auto whitespace-pre pr-1.5 text-[8px]">EasyBIM技术服务群：787823095  当前版本：V1-3.02</p>
      </footer>
    </div>
  );
}
